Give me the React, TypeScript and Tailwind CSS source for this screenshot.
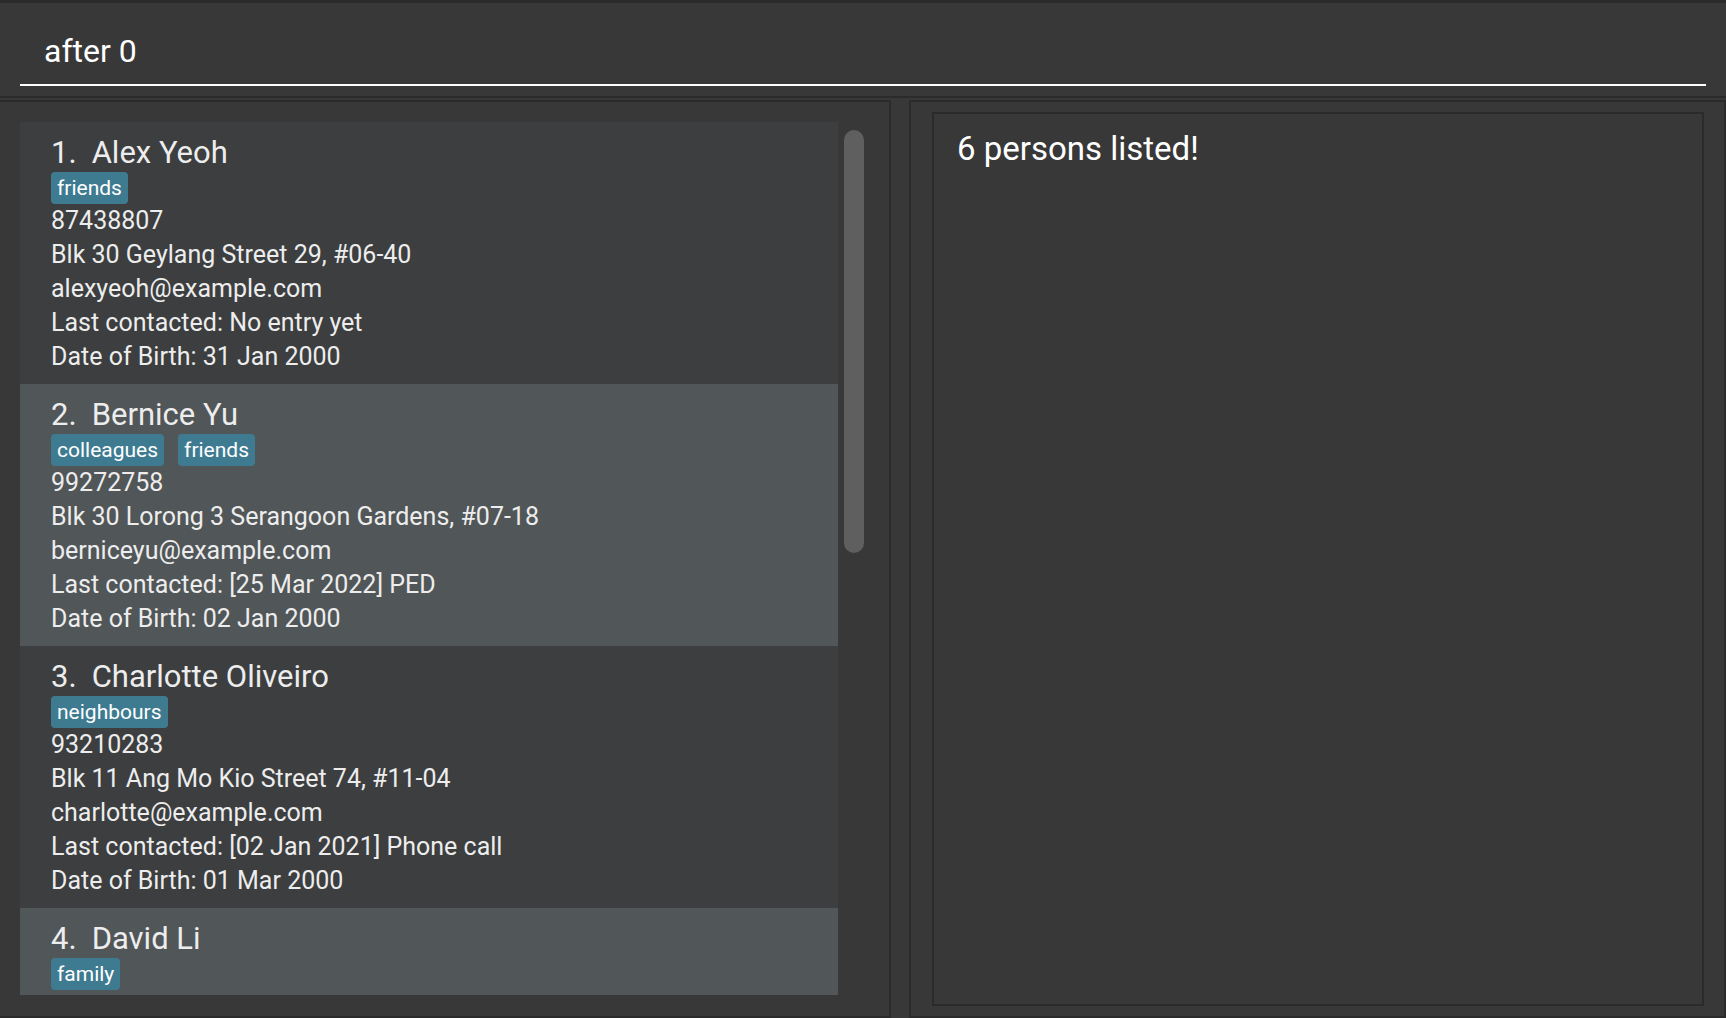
import React from 'react';

type Person = {
  name: string;
  tags: string[];
  phone: string;
  address: string;
  email: string;
  lastContacted: string;
  birthday: string;
};

const persons: Person[] = [
  {
    name: 'Alex Yeoh',
    tags: ['friends'],
    phone: '87438807',
    address: 'Blk 30 Geylang Street 29, #06-40',
    email: 'alexyeoh@example.com',
    lastContacted: 'No entry yet',
    birthday: '31 Jan 2000',
  },
  {
    name: 'Bernice Yu',
    tags: ['colleagues', 'friends'],
    phone: '99272758',
    address: 'Blk 30 Lorong 3 Serangoon Gardens, #07-18',
    email: 'berniceyu@example.com',
    lastContacted: '[25 Mar 2022] PED',
    birthday: '02 Jan 2000',
  },
  {
    name: 'Charlotte Oliveiro',
    tags: ['neighbours'],
    phone: '93210283',
    address: 'Blk 11 Ang Mo Kio Street 74, #11-04',
    email: 'charlotte@example.com',
    lastContacted: '[02 Jan 2021] Phone call',
    birthday: '01 Mar 2000',
  },
  {
    name: 'David Li',
    tags: ['family'],
    phone: '91031282',
    address: 'Blk 436 Serangoon Gardens Street 26, #16-43',
    email: 'lidavid@example.com',
    lastContacted: 'No entry yet',
    birthday: '03 Jan 2000',
  },
];

const PersonCard: React.FC<{ person: Person; index: number }> = ({ person, index }) => (
  <div
    className={`shrink-0 h-[262px] pt-[11px] pb-[10px] pl-[31px] text-[#ededed] ${
      index % 2 === 0 ? 'bg-[#3c3e3f]' : 'bg-[#515658]'
    }`}
  >
    <div className="flex gap-[15px] text-[31px] leading-[39px]">
      <span>{index + 1}.</span>
      <span>{person.name}</span>
    </div>
    <div className="flex gap-[14px] h-[32px]">
      {person.tags.map(tag => (
        <span key={tag} className="bg-[#3e7b91] text-white rounded-[4px] px-[6px] py-[3px] text-[21px] leading-[26px]">
          {tag}
        </span>
      ))}
    </div>
    <div className="text-[25px] leading-[34px]">
      <div>{person.phone}</div>
      <div>{person.address}</div>
      <div>{person.email}</div>
      <div>Last contacted: {person.lastContacted}</div>
      <div>Date of Birth: {person.birthday}</div>
    </div>
  </div>
);

export default function App() {
  return (
    <div className="w-[1726px] h-[1018px] flex flex-col bg-[#383838] text-white font-['Roboto',sans-serif] overflow-hidden">
      {/* command box */}
      <div className="h-[98px] shrink-0 border-t-[3px] border-b-2 border-[#2b2b2b] px-[20px] pt-[28px]">
        <div className="border-b-2 border-white pl-[24px] pb-[13px] text-[32px] leading-[40px]">after 0</div>
      </div>

      <div className="flex-1 flex pt-[2px] min-h-0">
        {/* person list */}
        <div className="w-[891px] shrink-0 flex border-t-2 border-r-2 border-b-2 border-[#2b2b2b] pl-[20px] pt-[20px]">
          <div className="w-[818px] h-[873px] flex flex-col overflow-hidden">
            {persons.map((p, i) => (
              <PersonCard key={p.name} person={p} index={i} />
            ))}
          </div>
          <div className="ml-[6px] w-[20px]">
            <div className="mt-[8px] h-[423px] rounded-full bg-[#5f5f5f]" />
          </div>
        </div>

        {/* result display */}
        <div className="ml-[18px] flex-1 flex border-2 border-[#2b2b2b] pt-[10px] pb-[10px] pl-[21px] pr-[20px]">
          <div className="flex-1 border-2 border-[#2a2a2a] pl-[23px] pt-[15px] text-[33px] leading-[40px]">
            6 persons listed!
          </div>
        </div>
      </div>
    </div>
  );
}
